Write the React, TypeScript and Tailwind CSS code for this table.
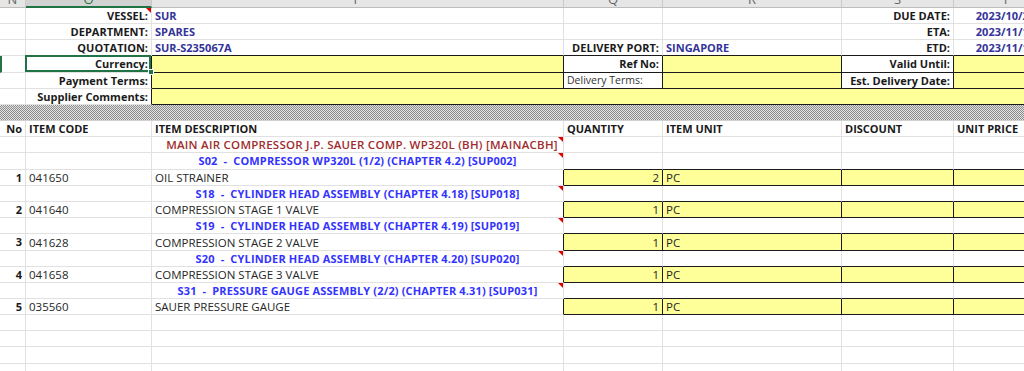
import React from "react";
import clsx from "clsx";

type Col = "N" | "O" | "P" | "Q" | "R" | "S" | "T" | "PT";

const widths: Record<Col, string> = {
  N: "w-[26px]",
  O: "w-[126px]",
  P: "w-[412px]",
  Q: "w-[99px]",
  R: "w-[179px]",
  S: "w-[112px]",
  T: "w-[104px]",
  PT: "w-[906px]",
};

type CellProps = {
  col: Col;
  r?: boolean; // black right border
  b?: boolean; // black bottom border
  y?: boolean; // yellow fill
  align?: "l" | "r" | "c";
  note?: boolean;
  className?: string;
  children?: React.ReactNode;
};

const Cell = ({ col, r, b, y, align = "l", note, className, children }: CellProps) => (
  <div
    className={clsx(
      "relative flex h-full shrink-0 items-center whitespace-nowrap border-r border-b px-[3px] pt-[1px]",
      widths[col],
      r ? "border-r-[#1a1a1a]" : "border-r-[#e1e1e1]",
      b ? "border-b-[#1a1a1a]" : "border-b-[#e1e1e1]",
      y ? "bg-[#ffff99]" : "bg-white",
      align === "r" && "justify-end",
      align === "c" && "justify-center",
      className
    )}
  >
    {children}
    {note && (
      <span className="absolute top-0 right-0 h-0 w-0 border-t-[5px] border-l-[5px] border-t-[#e00000] border-l-transparent" />
    )}
  </div>
);

const Row = ({ h = "h-4", children }: { h?: string; children?: React.ReactNode }) => (
  <div className={clsx("flex", h)}>{children}</div>
);

const Label = ({ children }: { children: React.ReactNode }) => (
  <span className="text-[11px] font-bold text-[#1a1a1a]">{children}</span>
);

const Val = ({ children }: { children: React.ReactNode }) => (
  <span className="text-[11px] font-bold text-[#333399]">{children}</span>
);

const headerCols: { col: Col; letter: string; active?: boolean }[] = [
  { col: "N", letter: "N" },
  { col: "O", letter: "O", active: true },
  { col: "P", letter: "P" },
  { col: "Q", letter: "Q" },
  { col: "R", letter: "R" },
  { col: "S", letter: "S" },
  { col: "T", letter: "T" },
];

const blocks = [
  {
    title: "S02  -  COMPRESSOR WP320L (1/2) (CHAPTER 4.2) [SUP002]",
    no: 1,
    code: "041650",
    desc: "OIL STRAINER",
    qty: 2,
  },
  {
    title: "S18  -  CYLINDER HEAD ASSEMBLY (CHAPTER 4.18) [SUP018]",
    no: 2,
    code: "041640",
    desc: "COMPRESSION STAGE 1 VALVE",
    qty: 1,
  },
  {
    title: "S19  -  CYLINDER HEAD ASSEMBLY (CHAPTER 4.19) [SUP019]",
    no: 3,
    code: "041628",
    desc: "COMPRESSION STAGE 2 VALVE",
    qty: 1,
  },
  {
    title: "S20  -  CYLINDER HEAD ASSEMBLY (CHAPTER 4.20) [SUP020]",
    no: 4,
    code: "041658",
    desc: "COMPRESSION STAGE 3 VALVE",
    qty: 1,
  },
  {
    title: "S31  -  PRESSURE GAUGE ASSEMBLY (2/2) (CHAPTER 4.31) [SUP031]",
    no: 5,
    code: "035560",
    desc: "SAUER PRESSURE GAUGE",
    qty: 1,
  },
];

const EmptyRow = ({ h = "h-4" }: { h?: string }) => (
  <Row h={h}>
    <Cell col="N" />
    <Cell col="O" />
    <Cell col="P" />
    <Cell col="Q" />
    <Cell col="R" />
    <Cell col="S" />
    <Cell col="T" />
  </Row>
);

export default function App() {
  return (
    <div className="h-[371px] w-[1024px] overflow-hidden bg-white font-['Open_Sans',sans-serif] text-[11.5px] text-[#262626]">
      {/* column letters, mostly scrolled out of view */}
      <div className="flex h-[8px]">
        {headerCols.map((h) => (
          <div
            key={h.col}
            className={clsx(
              "flex h-full shrink-0 justify-center overflow-hidden border-r border-r-[#c9c9c9]",
              widths[h.col],
              h.active
                ? "border-b-2 border-b-[#217346] bg-[#d2d2d2] text-[#217346]"
                : "border-b border-b-[#bdbdbd] bg-[#e6e6e6] text-[#666]"
            )}
          >
            <span className="-mt-[7px] block text-[13px] leading-none">{h.letter}</span>
          </div>
        ))}
      </div>

      <Row>
        <Cell col="N" />
        <Cell col="O" align="r" note>
          <Label>VESSEL:</Label>
        </Cell>
        <Cell col="P">
          <Val>SUR</Val>
        </Cell>
        <Cell col="Q" />
        <Cell col="R" />
        <Cell col="S" align="r">
          <Label>DUE DATE:</Label>
        </Cell>
        <Cell col="T" align="c">
          <Val>2023/10/25</Val>
        </Cell>
      </Row>
      <Row>
        <Cell col="N" />
        <Cell col="O" align="r">
          <Label>DEPARTMENT:</Label>
        </Cell>
        <Cell col="P">
          <Val>SPARES</Val>
        </Cell>
        <Cell col="Q" />
        <Cell col="R" />
        <Cell col="S" align="r">
          <Label>ETA:</Label>
        </Cell>
        <Cell col="T" align="c">
          <Val>2023/11/15</Val>
        </Cell>
      </Row>
      <Row>
        <Cell col="N" />
        <Cell col="O" align="r">
          <Label>QUOTATION:</Label>
        </Cell>
        <Cell col="P" b>
          <Val>SUR-S235067A</Val>
        </Cell>
        <Cell col="Q" b align="r">
          <Label>DELIVERY PORT:</Label>
        </Cell>
        <Cell col="R" b>
          <Val>SINGAPORE</Val>
        </Cell>
        <Cell col="S" b align="r">
          <Label>ETD:</Label>
        </Cell>
        <Cell col="T" b align="c">
          <Val>2023/11/18</Val>
        </Cell>
      </Row>
      <Row h="h-[17px]">
        <Cell col="N" className="border-l-2 border-l-[#217346]" />
        <Cell col="O" r align="r">
          <Label>Currency:</Label>
          <span className="pointer-events-none absolute -top-[1px] -left-[1px] h-[calc(100%+1px)] w-[calc(100%+1px)] border-2 border-[#217346]" />
          <span className="absolute -right-[3px] -bottom-[3px] z-10 h-[6px] w-[6px] border border-white bg-[#217346]" />
        </Cell>
        <Cell col="P" y r b />
        <Cell col="Q" r b align="r">
          <Label>Ref No:</Label>
        </Cell>
        <Cell col="R" y r b />
        <Cell col="S" r b align="r">
          <Label>Valid Until:</Label>
        </Cell>
        <Cell col="T" y b />
      </Row>
      <Row>
        <Cell col="N" />
        <Cell col="O" r align="r">
          <Label>Payment Terms:</Label>
        </Cell>
        <Cell col="P" y r b />
        <Cell col="Q" r b>
          <span className="text-[10.5px] text-[#333]">Delivery Terms:</span>
        </Cell>
        <Cell col="R" y r b />
        <Cell col="S" r b align="r">
          <Label>Est. Delivery Date:</Label>
        </Cell>
        <Cell col="T" y b />
      </Row>
      <Row>
        <Cell col="N" />
        <Cell col="O" r align="r">
          <Label>Supplier Comments:</Label>
        </Cell>
        <Cell col="PT" y b />
      </Row>

      {/* separator band */}
      <div className="h-4 border-b border-b-[#d0d0d0] bg-[repeating-conic-gradient(#8a8a8a_0%_25%,#e4e4e4_0%_50%)] bg-[length:2px_2px]" />

      <Row>
        <Cell col="N" align="r">
          <Label>No</Label>
        </Cell>
        <Cell col="O">
          <Label>ITEM CODE</Label>
        </Cell>
        <Cell col="P">
          <Label>ITEM DESCRIPTION</Label>
        </Cell>
        <Cell col="Q">
          <Label>QUANTITY</Label>
        </Cell>
        <Cell col="R">
          <Label>ITEM UNIT</Label>
        </Cell>
        <Cell col="S">
          <Label>DISCOUNT</Label>
        </Cell>
        <Cell col="T">
          <Label>UNIT PRICE</Label>
        </Cell>
      </Row>
      <Row>
        <Cell col="N" />
        <Cell col="O" />
        <Cell col="P" align="c" note className="pl-[12px]">
          <span className="font-semibold tracking-[0.25px] text-[#a02c2c]">
            MAIN AIR COMPRESSOR J.P. SAUER COMP. WP320L (BH) [MAINACBH]
          </span>
        </Cell>
        <Cell col="Q" />
        <Cell col="R" />
        <Cell col="S" />
        <Cell col="T" />
      </Row>

      {blocks.map((item, i) => (
        <React.Fragment key={item.no}>
          <Row h={i === 0 ? "h-[17px]" : "h-4"}>
            <Cell col="N" />
            <Cell col="O" />
            <Cell col="P" align="c" note>
              <span className="text-[11px] font-bold tracking-[0.15px] whitespace-pre text-[#3333ff]">{item.title}</span>
            </Cell>
            <Cell col="Q" b />
            <Cell col="R" b />
            <Cell col="S" b />
            <Cell col="T" b />
          </Row>
          <Row h={i === 2 ? "h-[17px]" : "h-4"}>
            <Cell col="N" align="r">
              <Label>{item.no}</Label>
            </Cell>
            <Cell col="O">{item.code}</Cell>
            <Cell col="P" r>
              {item.desc}
            </Cell>
            <Cell col="Q" y r b align="r">
              {item.qty}
            </Cell>
            <Cell col="R" y r b>
              PC
            </Cell>
            <Cell col="S" y r b />
            <Cell col="T" y b />
          </Row>
        </React.Fragment>
      ))}

      <EmptyRow />
      <EmptyRow />
      <EmptyRow h="h-[17px]" />
      <EmptyRow />
    </div>
  );
}
